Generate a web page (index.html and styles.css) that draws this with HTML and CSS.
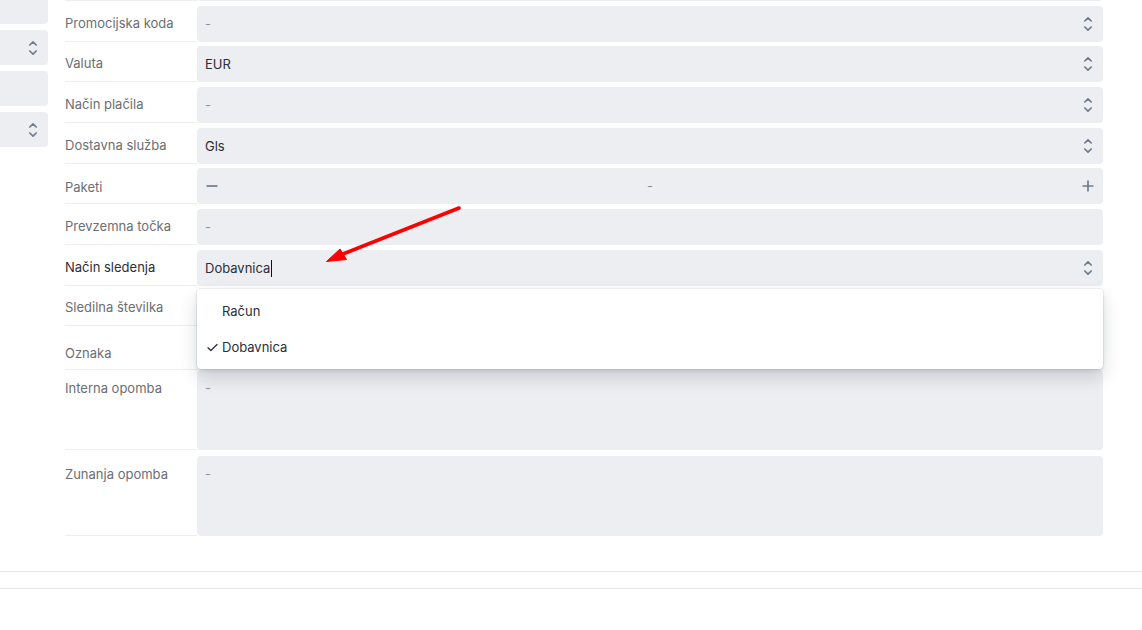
FILE: index.html
```html
<!DOCTYPE html>
<html lang="sl">
<head>
<meta charset="utf-8">
<title>Naročilo</title>
<link rel="stylesheet" href="styles.css">
</head>
<body>
<div class="page">
  <div class="layout">
    <aside class="side">
      <div class="stub"></div>
      <div class="stub"><svg class="chev" viewBox="0 0 10 16"><path d="M1.8 5 L5 1.8 L8.2 5 M1.8 11 L5 14.2 L8.2 11"/></svg></div>
      <div class="stub"></div>
      <div class="stub"><svg class="chev" viewBox="0 0 10 16"><path d="M1.8 5 L5 1.8 L8.2 5 M1.8 11 L5 14.2 L8.2 11"/></svg></div>
    </aside>
    <main class="form">
      <div class="row">
        <div class="lbl"></div>
        <div class="field"><div class="input"></div></div>
      </div>
      <div class="row">
        <div class="lbl">Promocijska koda</div>
        <div class="field"><div class="input select"><span class="ph">-</span><svg class="chev" viewBox="0 0 10 16"><path d="M1.8 5 L5 1.8 L8.2 5 M1.8 11 L5 14.2 L8.2 11"/></svg></div></div>
      </div>
      <div class="row">
        <div class="lbl">Valuta</div>
        <div class="field"><div class="input select"><span class="val">EUR</span><svg class="chev" viewBox="0 0 10 16"><path d="M1.8 5 L5 1.8 L8.2 5 M1.8 11 L5 14.2 L8.2 11"/></svg></div></div>
      </div>
      <div class="row">
        <div class="lbl">Način plačila</div>
        <div class="field"><div class="input select"><span class="ph">-</span><svg class="chev" viewBox="0 0 10 16"><path d="M1.8 5 L5 1.8 L8.2 5 M1.8 11 L5 14.2 L8.2 11"/></svg></div></div>
      </div>
      <div class="row">
        <div class="lbl">Dostavna služba</div>
        <div class="field"><div class="input select"><span class="val">Gls</span><svg class="chev" viewBox="0 0 10 16"><path d="M1.8 5 L5 1.8 L8.2 5 M1.8 11 L5 14.2 L8.2 11"/></svg></div></div>
      </div>
      <div class="row">
        <div class="lbl lbl-low">Paketi</div>
        <div class="field"><div class="input stepper">
          <svg class="step" viewBox="0 0 12 12"><path d="M0.5 6 H11.5"/></svg>
          <span class="ph">-</span>
          <svg class="step" viewBox="0 0 12 12"><path d="M0.5 6 H11.5 M6 0.5 V11.5"/></svg>
        </div></div>
      </div>
      <div class="row">
        <div class="lbl">Prevzemna točka</div>
        <div class="field"><div class="input"><span class="ph">-</span></div></div>
      </div>
      <div class="row">
        <div class="lbl lbl-active">Način sledenja</div>
        <div class="field open">
          <div class="input select"><span class="val">Dobavnica<span class="caret"></span></span><svg class="chev" viewBox="0 0 10 16"><path d="M1.8 5 L5 1.8 L8.2 5 M1.8 11 L5 14.2 L8.2 11"/></svg></div>
          <ul class="menu">
            <li class="opt">Račun</li>
            <li class="opt selected"><svg class="check" viewBox="0 0 12 10"><path d="M1 5.2 L4.2 8.4 L11 1.6"/></svg>Dobavnica</li>
          </ul>
        </div>
      </div>
      <div class="row">
        <div class="lbl">Sledilna številka</div>
        <div class="field"><div class="input"><span class="ph">-</span></div></div>
      </div>
      <div class="row row-tags">
        <div class="lbl lbl-tags">Oznaka</div>
        <div class="field"><div class="input tags"></div></div>
      </div>
      <div class="row row-text">
        <div class="lbl lbl-top">Interna opomba</div>
        <div class="field field-flush"><div class="textarea"><span class="ph">-</span></div></div>
      </div>
      <div class="row row-text">
        <div class="lbl lbl-top lbl-top2">Zunanja opomba</div>
        <div class="field field-gap"><div class="textarea"><span class="ph">-</span></div></div>
      </div>
    </main>
  </div>
  <footer class="foot"></footer>
  <svg class="annot" width="1142" height="630" viewBox="0 0 1142 630">
    <path d="M459 208 L338 256" stroke="#ff0000" stroke-width="3.6" stroke-linecap="round" fill="none"/>
    <path d="M326.5 261.5 L340 249 L346.5 259.5 Z" fill="#ff0000" stroke="#ff0000" stroke-width="1" stroke-linejoin="round"/>
  </svg>
</div>
</body>
</html>
```
FILE: styles.css
```css
* { box-sizing: border-box; }
html, body { margin: 0; padding: 0; background: #ffffff; }
body {
  font-family: Inter, "Noto Sans", "Liberation Sans", sans-serif;
  font-size: 13px;
  line-height: 20px;
  color: #2b2f36;
  overflow: hidden;
  height: 630px;
}
.page { position: relative; width: 1142px; height: 630px; overflow: hidden; }
.layout {
  display: flex;
  gap: 17px;
  margin-top: -39.67px;
  padding-right: 39px;
}
.side {
  width: 48px;
  flex: none;
  display: flex;
  flex-direction: column;
  gap: 6px;
  padding-top: 28.67px;
}
.stub {
  height: 35px;
  background: #eceef1;
  border-radius: 0 4px 4px 0;
  display: flex;
  align-items: center;
  justify-content: flex-end;
  padding-right: 10px;
}
.chev { width: 10px; height: 16px; flex: none; }
.chev path { fill: none; stroke: #6f7d92; stroke-width: 1.7; stroke-linecap: round; stroke-linejoin: round; }
.form { flex: 1; display: flex; flex-direction: column; }
.row {
  display: grid;
  grid-template-columns: 132px 1fr;
  height: 40.67px;
}
.lbl {
  border-bottom: 1px solid #eceef0;
  color: #6b6e73;
  display: flex;
  align-items: center;
  padding-top: 4px;
  white-space: nowrap;
}
.lbl-low { padding-top: 8px; }
.lbl-active { color: #2b2f36; }
.field { position: relative; padding-top: 4.67px; }
.input {
  height: 36px;
  background: #eceef1;
  border-radius: 4px;
  display: flex;
  align-items: center;
  padding: 0 8px;
}
.select { justify-content: space-between; padding-right: 10px; }
.ph { color: #8b93a1; }
.val { color: #2b2f36; position: relative; }
.caret {
  display: inline-block;
  width: 1px;
  height: 17px;
  background: #111;
  vertical-align: -4px;
  margin-left: 1px;
}
.stepper { justify-content: space-between; padding: 0 9px 0 9px; }
.step { width: 12px; height: 12px; }
.step path { stroke: #6f7d92; stroke-width: 1.7; fill: none; }
.menu {
  position: absolute;
  left: 0;
  right: 0;
  top: 44px;
  margin: 0;
  padding: 4px 0;
  list-style: none;
  background: #ffffff;
  border-radius: 4px;
  box-shadow: 0 0 0 1px rgba(15, 23, 42, 0.05), 0 8px 18px rgba(15, 23, 42, 0.16), 0 2px 4px rgba(15, 23, 42, 0.08);
  z-index: 5;
}
.opt {
  height: 36px;
  display: flex;
  align-items: center;
  padding-left: 25px;
  color: #2b2f36;
  position: relative;
}
.check {
  position: absolute;
  left: 10px;
  top: 14px;
  width: 11px;
  height: 9px;
}
.check path { fill: none; stroke: #2b2f36; stroke-width: 1.4; stroke-linecap: round; stroke-linejoin: round; }
.row-tags { height: 43.67px; }
.lbl-tags { padding-top: 10px; }
.tags { height: 39px; }
.row-text { height: auto; }
.lbl-top { align-items: flex-start; padding-top: 8px; }
.lbl-top2 { padding-top: 14px; }
.field-flush { padding-top: 0; }
.field-gap { padding-top: 6px; }
.textarea {
  height: 80px;
  background: #eceef1;
  border-radius: 4px;
  padding: 8px 8px;
}
.foot {
  margin-top: 35px;
  height: 18px;
  border-top: 1px solid #e4e6e9;
  border-bottom: 1px solid #e4e6e9;
}
.annot { position: absolute; left: 0; top: 0; pointer-events: none; z-index: 10; }
```
